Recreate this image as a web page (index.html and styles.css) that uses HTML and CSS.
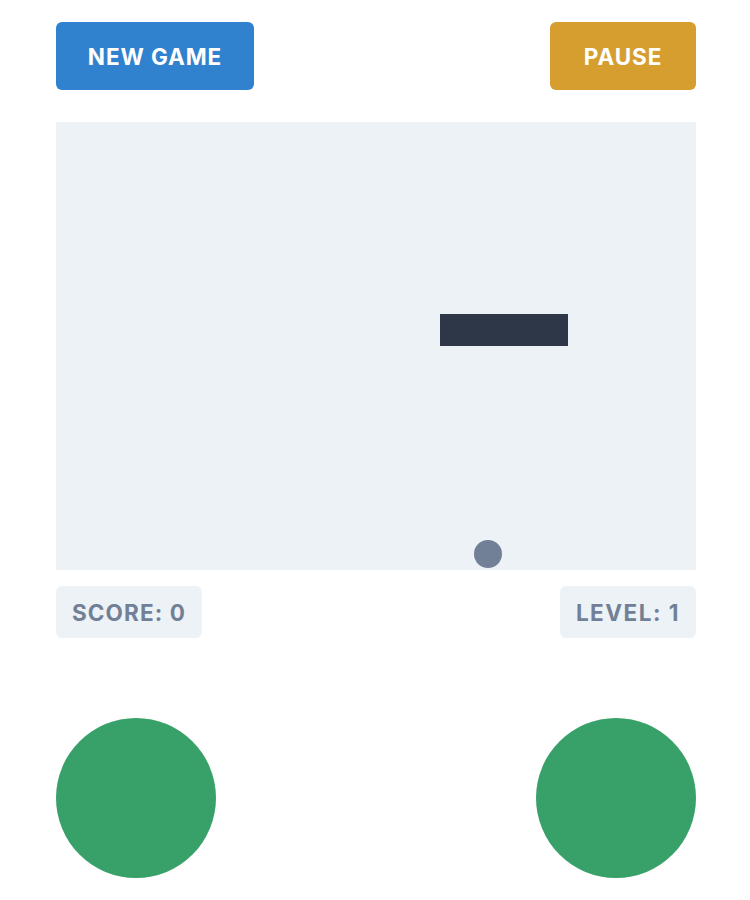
FILE: index.html
```html
<!DOCTYPE html>
<html lang="en">
<head>
<meta charset="utf-8">
<title>Breakout</title>
<link rel="stylesheet" href="styles.css">
</head>
<body>
<div class="app">
  <div class="toolbar">
    <button class="btn btn-new">NEW GAME</button>
    <button class="btn btn-pause">PAUSE</button>
  </div>
  <div class="board">
    <div class="paddle"></div>
    <div class="ball"></div>
  </div>
  <div class="stats">
    <div class="stat">SCORE: 0</div>
    <div class="stat stat-level">LEVEL: 1</div>
  </div>
  <div class="controls">
    <button class="pad" aria-label="Left"></button>
    <button class="pad" aria-label="Right"></button>
  </div>
</div>
</body>
</html>
```
FILE: styles.css
```css
* { box-sizing: border-box; }
html, body { margin: 0; padding: 0; background: #ffffff; }
body { font-family: Inter, "Noto Sans", sans-serif; }
.app {
  width: 750px;
  padding: 22px 54px 0 56px;
  display: flex;
  flex-direction: column;
}
.toolbar {
  display: flex;
  justify-content: space-between;
  width: 640px;
}
.btn {
  height: 68px;
  border: none;
  border-radius: 6px;
  color: #ffffff;
  font-family: Inter, "Noto Sans", sans-serif;
  font-weight: 700;
  font-size: 22.5px;
  letter-spacing: 0.9px;
  padding: 0;
}
.btn-new { background: #3182ce; width: 198px; }
.btn-pause { background: #d69e2e; width: 146px; }
.board {
  position: relative;
  margin-top: 32px;
  width: 640px;
  height: 448px;
  background: #edf2f7;
}
.paddle {
  position: absolute;
  left: 384px;
  top: 192px;
  width: 128px;
  height: 32px;
  background: #2d3748;
}
.ball {
  position: absolute;
  left: 418px;
  top: 418px;
  width: 28px;
  height: 28px;
  border-radius: 50%;
  background: #718096;
}
.stats {
  margin-top: 16px;
  width: 640px;
  display: flex;
  justify-content: space-between;
}
.stat {
  height: 52px;
  padding: 0 16px;
  display: flex;
  align-items: center;
  background: #edf2f7;
  border-radius: 6px;
  color: #718096;
  font-weight: 700;
  font-size: 22.5px;
  letter-spacing: 1.1px;
}
.stat-level { letter-spacing: 1.5px; }
.controls {
  margin-top: 80px;
  width: 640px;
  display: flex;
  justify-content: space-between;
}
.pad {
  width: 160px;
  height: 160px;
  border-radius: 50%;
  border: none;
  padding: 0;
  background: #38a169;
}
```
